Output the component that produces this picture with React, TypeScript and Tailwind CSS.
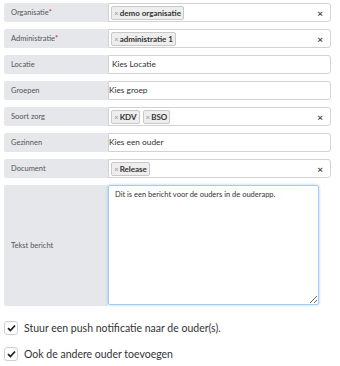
import React from "react";

function Chip({ text }: { text: string }) {
  return (
    <span className="inline-flex items-center h-[14px] px-[2px] mr-[3px] rounded-[2px] border border-[#c8c8c8] bg-[#eeeeee] text-[8px] font-bold text-[#333] leading-none">
      <span className="text-[#999] font-normal mr-[1px]">×</span>
      {text}
    </span>
  );
}

function Row({ label, required, children, clear, pad = true }: { label: string; required?: boolean; children: React.ReactNode; clear?: boolean; pad?: boolean }) {
  return (
    <div className="flex h-[19px] mb-[7px]">
      <div className="w-[104px] shrink-0 flex items-center pl-[7px] bg-[#e5e7ea] rounded-l-[2px] text-[7.5px] text-[#555]">
        {label}
        {required && <span className="text-[#e02020]">*</span>}
      </div>
      <div className={`w-[223px] flex items-center border border-[#d2d2d2] rounded-r-[3px] bg-white ${pad ? "pl-[2px]" : ""}`}>
        <div className="flex-1 flex items-center text-[8.3px] text-[#333]">{children}</div>
        {clear && <span className="text-[10px] font-bold text-[#444] mr-[7px] leading-none">×</span>}
      </div>
    </div>
  );
}

export default function App() {
  return (
    <div className="w-[340px] h-[366px] bg-white pl-[4px] pt-[3px]" style={{ fontFamily: "Lato, 'Open Sans', sans-serif" }}>
      <Row label="Organisatie" required clear>
        <Chip text="demo organisatie" />
      </Row>
      <Row label="Administratie" required clear>
        <Chip text="administratie 1" />
      </Row>
      <Row label="Locatie">
        <span className="pl-[1px]">Kies Locatie</span>
      </Row>
      <Row label="Groepen" pad={false}>
        <span>Kies groep</span>
      </Row>
      <Row label="Soort zorg" clear>
        <Chip text="KDV" />
        <Chip text="BSO" />
      </Row>
      <Row label="Gezinnen" pad={false}>
        <span>Kies een ouder</span>
      </Row>
      <Row label="Document" clear>
        <Chip text="Release" />
      </Row>
      <div className="flex h-[121px]">
        <div className="w-[104px] shrink-0 flex items-center pl-[7px] bg-[#e5e7ea] rounded-l-[2px] text-[7.5px] text-[#555]">
          Tekst bericht
        </div>
        <textarea
          className="w-[211px] h-[120px] border border-[#9fcdf5] rounded-[2px] shadow-[0_0_3px_rgba(102,175,233,0.6)] outline-none pl-[6px] pt-[3px] text-[7.5px] text-[#333] resize-y"
          defaultValue="Dit is een bericht voor de ouders in de ouderapp."
        />
      </div>
      <div className="mt-[14px] flex flex-col gap-[10px]">
        {["Stuur een push notificatie naar de ouder(s).", "Ook de andere ouder toevoegen"].map((t) => (
          <div key={t} className="flex items-center gap-[6px] h-[16px]">
            <span className="w-[14px] h-[14px] flex items-center justify-center rounded-[3px] border border-[#cfcfcf] bg-white">
              <svg width="9" height="8" viewBox="0 0 9 8">
                <path d="M1 4.2 L3.4 6.5 L8 1.5" stroke="#222" strokeWidth="1.8" fill="none" />
              </svg>
            </span>
            <span className="text-[10.5px] text-[#333] leading-none">{t}</span>
          </div>
        ))}
      </div>
    </div>
  );
}
